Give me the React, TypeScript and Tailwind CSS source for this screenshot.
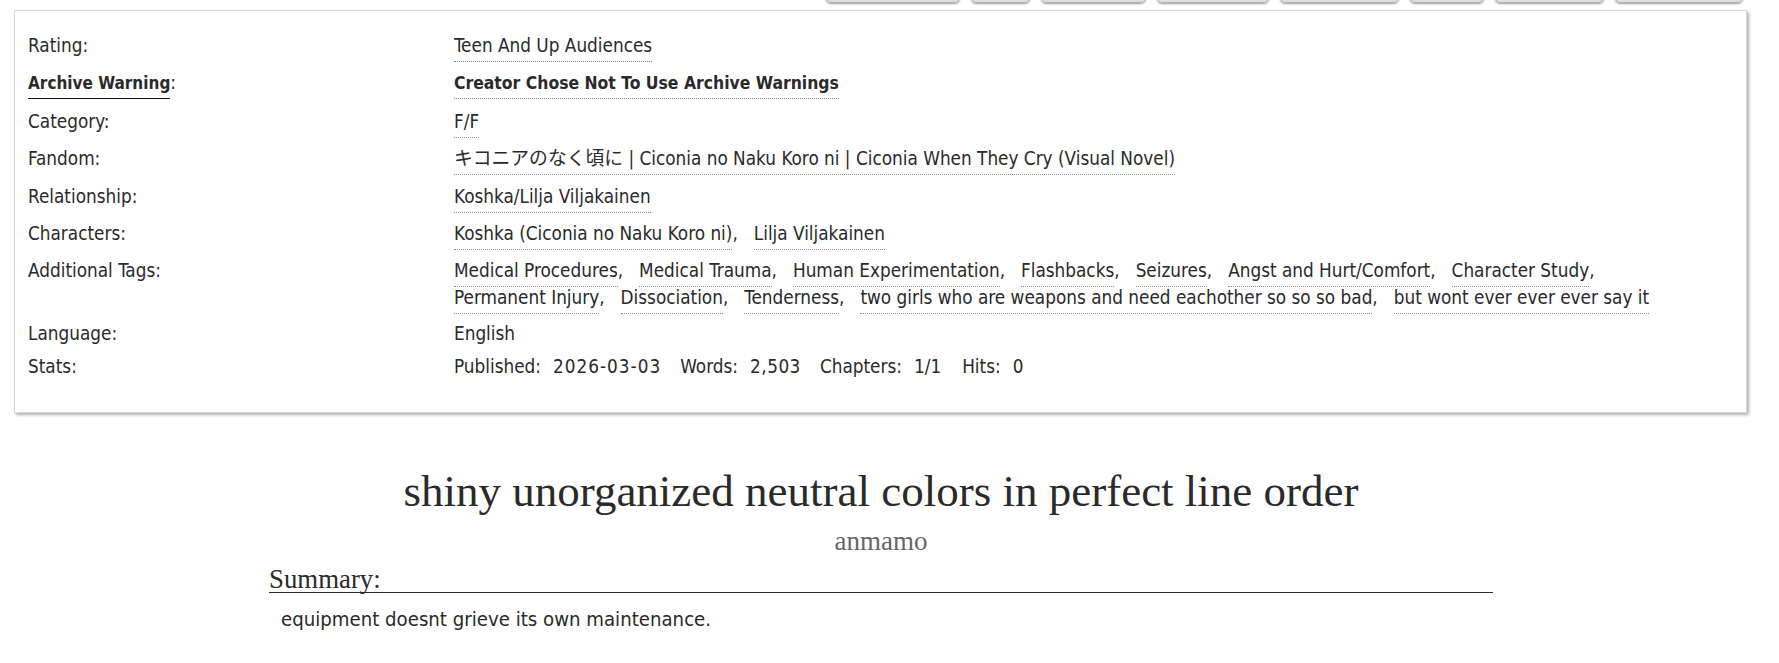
import React from 'react';

const sans = "font-['DejaVu_Sans_Condensed','DejaVu_Sans','Noto_Sans_CJK_JP',sans-serif]";
const serif = "font-['Liberation_Serif','DejaVu_Serif',serif]";

// widths of the work nav buttons, only their bottom edge shows above the meta box
const navButtons = ['w-[134px]', 'w-[59px]', 'w-[105px]', 'w-[112px]', 'w-[119px]', 'w-[74px]', 'w-[109px]', 'w-[128px]'];

const additionalTags = [
  'Medical Procedures',
  'Medical Trauma',
  'Human Experimentation',
  'Flashbacks',
  'Seizures',
  'Angst and Hurt/Comfort',
  'Character Study',
  'Permanent Injury',
  'Dissociation',
  'Tenderness',
  'two girls who are weapons and need eachother so so so bad',
  'but wont ever ever ever say it',
];

function Tag({ children, bold }: { children: React.ReactNode; bold?: boolean }) {
  return (
    <a
      className={`border-b border-dotted border-[#8a8a8a] pb-[5px] ${bold ? 'font-bold text-[17.4px]' : ''}`}
    >
      {children}
    </a>
  );
}

function TagList({ tags }: { tags: string[] }) {
  return (
    <ul className="flex flex-wrap gap-x-[16px]">
      {tags.map((t, i) => (
        <li key={t}>
          <Tag>{t}</Tag>
          {i < tags.length - 1 ? ',' : ''}
        </li>
      ))}
    </ul>
  );
}

function Row({
  label,
  children,
  mb = 'mb-[10.4px]',
}: {
  label: React.ReactNode;
  children: React.ReactNode;
  mb?: string;
}) {
  return (
    <div className={`flex ${mb}`}>
      <dt className="w-[426px] shrink-0">{label}</dt>
      <dd className="flex-1">{children}</dd>
    </div>
  );
}

export default function App() {
  return (
    <div className="min-h-screen bg-white overflow-hidden">
      <div className={`w-[1762px] text-[#2a2a2a] ${sans} text-[18.8px] leading-[27px]`}>
        {/* work navigation, scrolled mostly off screen */}
        <ul className="flex justify-end gap-[11px] pr-[19px] -mt-[27px]">
          {navButtons.map((w, i) => (
            <li
              key={i}
              className={`${w} h-[30px] rounded-[5px] border border-[#b5b5b5] bg-linear-to-b from-white to-[#dcdcdc] shadow-[0_1px_2px_#9a9a9a]`}
            />
          ))}
        </ul>

        {/* work meta */}
        <dl className="ml-[14px] mr-[15px] mt-[7px] border border-[#d6d6d6] bg-white pl-[13px] pr-[13px] pt-[21px] pb-[32px] shadow-[2px_2px_3px_#b0b0b0]">
          <Row label="Rating:">
            <Tag>Teen And Up Audiences</Tag>
          </Row>
          <Row
            label={
              <>
                <a className="font-bold text-[17px] border-b border-[#111] pb-[5px]">Archive Warning</a>:
              </>
            }
          >
            <Tag bold>Creator Chose Not To Use Archive Warnings</Tag>
          </Row>
          <Row label="Category:">
            <Tag>F/F</Tag>
          </Row>
          <Row label="Fandom:">
            <Tag>キコニアのなく頃に | Ciconia no Naku Koro ni | Ciconia When They Cry (Visual Novel)</Tag>
          </Row>
          <Row label="Relationship:">
            <Tag>Koshka/Lilja Viljakainen</Tag>
          </Row>
          <Row label="Characters:">
            <TagList tags={['Koshka (Ciconia no Naku Koro ni)', 'Lilja Viljakainen']} />
          </Row>
          <Row label="Additional Tags:" mb="mb-[9px]">
            <TagList tags={additionalTags} />
          </Row>
          <Row label="Language:" mb="mb-[6px]">
            English
          </Row>
          <Row label="Stats:" mb="mb-0">
            <div className="flex">
              <span>Published:</span>
              <span className="ml-[12px] tracking-[1px]">2026-03-03</span>
              <span className="ml-[19px]">Words:</span>
              <span className="ml-[12px] tracking-[0.5px]">2,503</span>
              <span className="ml-[19px]">Chapters:</span>
              <span className="ml-[12px]">1/1</span>
              <span className="ml-[21px]">Hits:</span>
              <span className="ml-[12px]">0</span>
            </div>
          </Row>
        </dl>

        {/* preface */}
        <div className="mx-[269px] mt-[52px]">
          <h2 className={`${serif} text-center text-[45px] leading-[52px] font-normal text-[#2a2a2a]`}>
            shiny unorganized neutral colors in perfect line order
          </h2>
          <h3 className={`${serif} mt-[8px] text-center text-[27px] leading-[32px] text-[#666]`}>anmamo</h3>
          <div className="mt-[10px]">
            <h3 className={`${serif} text-[26.8px] leading-[25px] border-b border-[#2a2a2a] text-[#2a2a2a]`}>
              Summary:
            </h3>
            <p className="pl-[12px] mt-[13px] text-[20.2px] leading-[27px]">
              equipment doesnt grieve its own maintenance.
            </p>
          </div>
        </div>
      </div>
    </div>
  );
}
